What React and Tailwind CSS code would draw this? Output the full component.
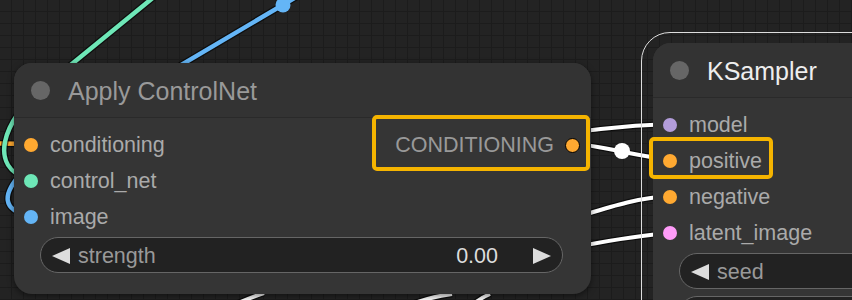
import React from "react";

function Tri({ dir }) {
  return (
    <svg width="18" height="16" viewBox="0 0 18 16" className="mt-[2px] shrink-0">
      {dir === "left" ? (
        <polygon points="0,8 18,0 18,16" fill="#dddddd" />
      ) : (
        <polygon points="18,8 0,0 0,16" fill="#dddddd" />
      )}
    </svg>
  );
}

function Slot({ dot, label }) {
  return (
    <div className="flex h-[36px] items-center gap-[12px] pl-[10px]">
      <span className={`mt-[2px] h-[14px] w-[14px] shrink-0 rounded-full ${dot}`} />
      <span className="mt-[4px] text-[21.5px] leading-none text-[#aaaaaa]">{label}</span>
    </div>
  );
}

function Widget({ label, value, className }) {
  return (
    <div
      className={`flex h-[36px] items-center rounded-full border border-[#666666] bg-[#222222] pl-[11px] pr-[11px] ${className}`}
    >
      <Tri dir="left" />
      <span className="ml-[8px] mt-[4px] text-[21.5px] leading-none text-[#999999]">{label}</span>
      <span className="ml-auto mt-[4px] text-[21.5px] leading-none text-[#dddddd]">{value}</span>
      {value !== undefined && <span className="w-[35px]" />}
      {value !== undefined && <Tri dir="right" />}
    </div>
  );
}

export default function App() {
  return (
    <div className="relative h-[300px] w-[852px] overflow-hidden bg-[#232323] font-['Liberation_Sans',Arial,sans-serif]">
      <svg className="absolute left-0 top-0" width="852" height="300">
        <defs>
          <pattern id="grid" width="12" height="12" patternUnits="userSpaceOnUse">
            <path d="M11.5 0 V12 M0 11.5 H12" stroke="#1c1c1c" strokeWidth="1" fill="none" />
          </pattern>
        </defs>
        <rect width="852" height="300" fill="#232323" />
        <rect width="852" height="300" fill="url(#grid)" />
        {/* orange conditioning in */}
        <path d="M -20 143 L 31 144" stroke="#000" strokeOpacity="0.6" strokeWidth="7" fill="none" />
        <path d="M -20 143 L 31 144" stroke="#FFA931" strokeWidth="4.5" fill="none" />
        {/* green control_net */}
        <path d="M 187 -30 L 40 90 C 5 119, -15 168, 31 180" stroke="#000" strokeOpacity="0.6" strokeWidth="7" fill="none" />
        <path d="M 187 -30 L 40 90 C 5 119, -15 168, 31 180" stroke="#6EE7B7" strokeWidth="4.5" fill="none" />
        {/* blue image */}
        <path d="M 325 -20 L 110 107 C 40 149, -30 205, 31 216" stroke="#000" strokeOpacity="0.6" strokeWidth="7" fill="none" />
        <path d="M 325 -20 L 110 107 C 40 149, -30 205, 31 216" stroke="#64B5F6" strokeWidth="4.5" fill="none" />
        <circle cx="283" cy="5" r="7.5" fill="#64B5F6" />
        {/* white links */}
        {[
          "M 450 150 C 560 135, 600 126, 670 124",
          "M 573 144 C 597.5 144, 645.5 159, 670 159",
          "M 450 240 C 560 235, 600 200, 670 196",
          "M 450 265 C 560 255, 600 238, 670 233",
          "M 236 304 C 245 300, 252 297, 264 293",
          "M 412 304 C 425 299, 438 296, 452 294",
          "M 474 304 C 478 300, 483 297, 490 294",
        ].map((d, i) => (
          <g key={i}>
            <path d={d} stroke="#000" strokeOpacity="0.6" strokeWidth="6.5" fill="none" />
            <path d={d} stroke="#ffffff" strokeWidth="4" fill="none" />
          </g>
        ))}
        <circle cx="622" cy="151" r="8" fill="#ffffff" />
      </svg>

      {/* Apply ControlNet node */}
      <div className="absolute left-[14px] top-[63px] flex h-[231px] w-[577px] flex-col rounded-[18px] bg-[#353535] shadow-[0_2px_6px_rgba(0,0,0,0.5)]">
        <div className="flex h-[54px] items-center rounded-t-[18px] bg-[#333333] pl-[17px]">
          <span className="h-[19px] w-[19px] rounded-full bg-[#666666]" />
          <span className="ml-[18px] mt-[2px] text-[25px] leading-none text-[#999999]">Apply ControlNet</span>
        </div>
        <div className="h-px bg-[#2a2a2a]" />
        <div className="flex flex-col pt-[8px]">
          <div className="flex items-center justify-between">
            <Slot dot="bg-[#FFA931]" label="conditioning" />
            <div className="flex items-center gap-[11px] pr-[11px]">
              <span className="mt-[4px] text-[21.5px] leading-none text-[#999999]">CONDITIONING</span>
              <span className="mt-[2px] h-[15px] w-[15px] rounded-full border-[1.5px] border-black bg-[#FFA931]" />
            </div>
          </div>
          <Slot dot="bg-[#6EE7B7]" label="control_net" />
          <Slot dot="bg-[#64B5F6]" label="image" />
          <Widget label="strength" value="0.00" className="ml-[26px] mr-[28px] mt-[3px]" />
        </div>
        <div className="absolute left-[358px] top-[52px] h-[56px] w-[218px] rounded-[5px] border-[4px] border-[#F5B400]" />
      </div>

      {/* KSampler selection outline */}
      <div className="absolute left-[641px] top-[32px] h-[320px] w-[260px] rounded-[29px] border-[1.5px] border-[#dddddd]" />

      {/* KSampler node */}
      <div className="absolute left-[653px] top-[43px] flex h-[300px] w-[240px] flex-col rounded-[18px] bg-[#353535]">
        <div className="flex h-[54px] items-center rounded-t-[18px] bg-[#333333] pl-[17px]">
          <span className="h-[19px] w-[19px] rounded-full bg-[#666666]" />
          <span className="ml-[18px] mt-[2px] text-[25px] leading-none text-[#eeeeee]">KSampler</span>
        </div>
        <div className="h-px bg-[#2a2a2a]" />
        <div className="flex flex-col pt-[8px]">
          <Slot dot="bg-[#B39DDB]" label="model" />
          <Slot dot="bg-[#FFA931]" label="positive" />
          <Slot dot="bg-[#FFA931]" label="negative" />
          <Slot dot="bg-[#FF9CF9]" label="latent_image" />
          <Widget label="seed" className="ml-[26px] mr-[-40px] mt-[3px]" />
          <Widget label="" className="ml-[26px] mr-[-40px] mt-[7px]" />
        </div>
        <div className="absolute left-[-4px] top-[94px] h-[42px] w-[124px] rounded-[5px] border-[4px] border-[#F5B400]" />
      </div>
    </div>
  );
}
